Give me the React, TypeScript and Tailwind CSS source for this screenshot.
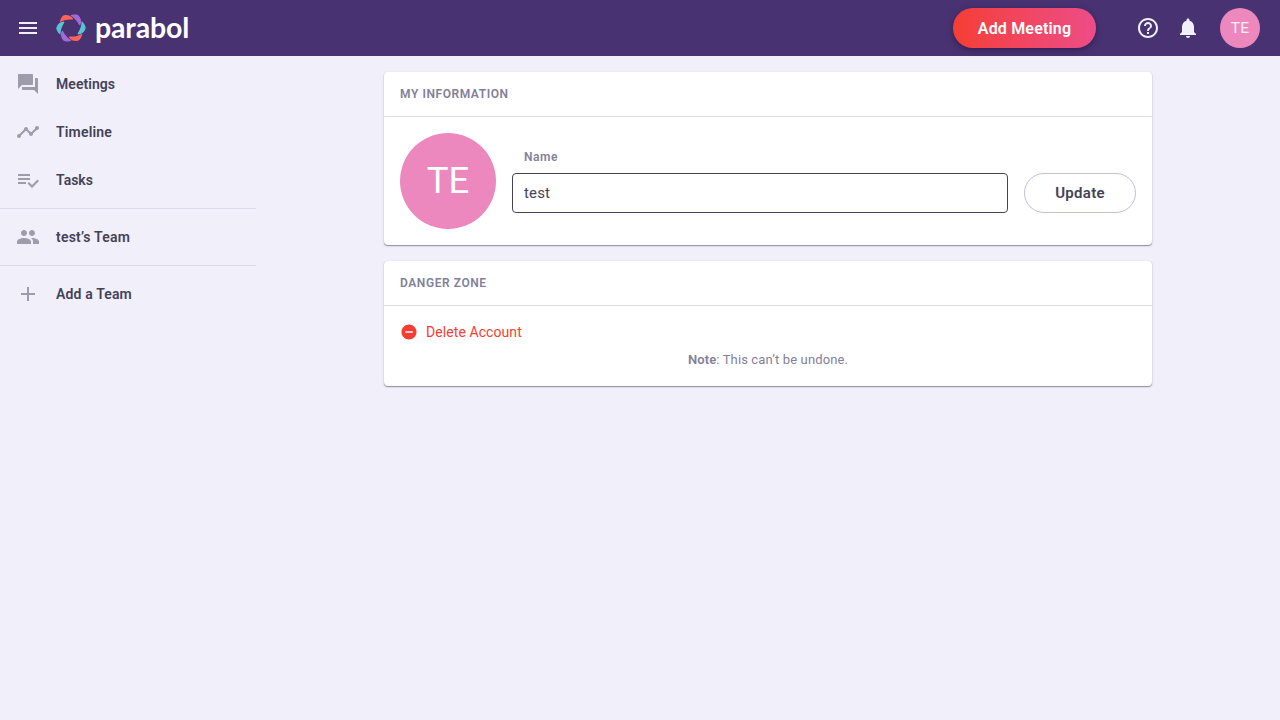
import type { ReactNode } from 'react'

const ICONS = {
  menu: 'M3 18h18v-2H3v2zm0-5h18v-2H3v2zm0-7v2h18V6H3z',
  help: 'M11 18h2v-2h-2v2zm1-16C6.48 2 2 6.48 2 12s4.48 10 10 10 10-4.48 10-10S17.52 2 12 2zm0 18c-4.41 0-8-3.59-8-8s3.59-8 8-8 8 3.59 8 8-3.59 8-8 8zm0-14c-2.21 0-4 1.79-4 4h2c0-1.1.9-2 2-2s2 .9 2 2c0 2-3 1.75-3 5h2c0-2.25 3-2.5 3-5 0-2.21-1.79-4-4-4z',
  bell: 'M12 22c1.1 0 2-.9 2-2h-4c0 1.1.89 2 2 2zm6-6v-5c0-3.07-1.64-5.64-4.5-6.32V4c0-.83-.67-1.5-1.5-1.5s-1.5.67-1.5 1.5v.68C7.63 5.36 6 7.92 6 11v5l-2 2v1h16v-1l-2-2z',
  forum: 'M21 6h-2v9H6v2c0 .55.45 1 1 1h11l4 4V7c0-.55-.45-1-1-1zm-4 6V3c0-.55-.45-1-1-1H3c-.55 0-1 .45-1 1v14l4-4h10c.55 0 1-.45 1-1z',
  timeline: 'M23 8c0 1.1-.9 2-2 2-.18 0-.35-.02-.51-.07l-3.56 3.55c.05.16.07.34.07.52 0 1.1-.9 2-2 2s-2-.9-2-2c0-.18.02-.36.07-.52l-2.55-2.55c-.16.05-.34.07-.52.07s-.36-.02-.52-.07l-4.55 4.56c.05.16.07.33.07.51 0 1.1-.9 2-2 2s-2-.9-2-2 .9-2 2-2c.18 0 .35.02.51.07l4.56-4.55C8.02 9.36 8 9.18 8 9c0-1.1.9-2 2-2s2 .9 2 2c0 .18-.02.36-.07.52l2.55 2.55c.16-.05.34-.07.52-.07s.36.02.52.07l3.55-3.56C19.02 8.35 19 8.18 19 8c0-1.1.9-2 2-2s2 .9 2 2z',
  tasks: 'M14 10H2v2h12v-2zm0-4H2v2h12V6zM2 16h8v-2H2v2zm19.5-4.5L23 13l-6.99 7-4.51-4.5L13 14l3.01 3 5.49-5.5z',
  group: 'M16 11c1.66 0 2.99-1.34 2.99-3S17.66 5 16 5c-1.66 0-3 1.34-3 3s1.34 3 3 3zm-8 0c1.66 0 2.99-1.34 2.99-3S9.66 5 8 5C6.34 5 5 6.34 5 8s1.34 3 3 3zm0 2c-2.33 0-7 1.17-7 3.5V19h14v-2.500c0-2.33-4.67-3.500-7-3.500zm8 0c-.29 0-.62.02-.97.05 1.16.84 1.97 1.97 1.97 3.450V19h6v-2.500c0-2.330-4.670-3.500-7-3.500z',
  add: 'M19 13h-6v6h-2v-6H5v-2h6V5h2v6h6v2z',
  remove: 'M12 2C6.48 2 2 6.48 2 12s4.48 10 10 10 10-4.48 10-10S17.52 2 12 2zm5 11H7v-2h10v2z',
}

function Icon({ name, className = 'size-6' }: { name: keyof typeof ICONS; className?: string }) {
  return (
    <svg viewBox="0 0 24 24" fill="currentColor" className={`shrink-0 ${className}`}>
      <path d={ICONS[name]} />
    </svg>
  )
}

const PETALS = ['#56c4d3', '#fd6157', '#a06bd6', '#56c4d3', '#fd6157', '#a06bd6']

function Logo() {
  return (
    <div className="ml-4 flex h-10 items-center">
      <svg viewBox="-15 -14 30 28" className="h-7 w-[30px] shrink-0">
        {PETALS.map((color, i) => (
          <path
            key={i}
            fill={color}
            transform={`rotate(${i * 60})`}
            d="M-7.300-6.500C-10.500-6.200-13-4.300-14.200-1.500C-14.900.2-14.800 1.200-14 2.600C-13.100 4.400-12.200 5.800-10.500 6.800C-10.500 2.400-9.300-1.500-6.900-5C-6.500-5.700-6.600-6.500-7.300-6.500Z"
          />
        ))}
      </svg>
      <span className="-mt-[3px] ml-[9px] font-['Lato'] text-[28.5px] leading-10 font-bold tracking-[-0.15px] text-white">parabol</span>
    </div>
  )
}

function NavItem({ icon, label, spacing }: { icon: keyof typeof ICONS; label: string; spacing: string }) {
  return (
    <a className="flex h-12 items-center px-4">
      <Icon name={icon} className="size-6 text-[#9d9bac]" />
      <span className={`ml-4 text-sm font-semibold ${spacing}`}>{label}</span>
    </a>
  )
}

function Panel({ title, spacing, children }: { title: string; spacing: string; children: ReactNode }) {
  return (
    <section className="rounded bg-white shadow-[0_0_1px_rgba(68,66,88,0.15),0_1px_1px_rgba(68,66,88,0.5),0_1px_3px_rgba(68,66,88,0.12)]">
      <h2 className={`flex h-[45px] items-center border-b border-[#dcdaeb] px-4 text-xs font-semibold text-[#82809a] ${spacing}`}>
        {title}
      </h2>
      {children}
    </section>
  )
}

export default function App() {
  return (
    <div className="flex h-screen flex-col bg-[#f1effa] font-['Roboto',sans-serif] text-[#444258]">
      <header className="flex h-14 shrink-0 items-center bg-[#493272] px-4 text-[#f1f0fa]">
        <Icon name="menu" />
        <Logo />
        <button className="ml-auto h-10 w-[143px] rounded-full bg-linear-to-r from-[#f53d33] to-[#ed4c86] pt-px text-base font-semibold tracking-[0.18px] text-white shadow-[0_2px_6px_rgba(30,15,55,0.55)]">
          Add Meeting
        </button>
        <Icon name="help" className="ml-10 size-6" />
        <Icon name="bell" className="ml-4 size-6" />
        <div className="mr-1 ml-5 flex size-10 items-center justify-center rounded-full bg-[#ec88be] pt-px text-[15.5px] tracking-[0.1px] text-white/85">TE</div>
      </header>
      <div className="flex flex-1">
        <nav className="w-64 shrink-0 pt-1">
          <NavItem icon="forum" label="Meetings" spacing="tracking-[0.05px]" />
          <NavItem icon="timeline" label="Timeline" spacing="tracking-[0.18px]" />
          <NavItem icon="tasks" label="Tasks" spacing="tracking-[0px]" />
          <hr className="my-1 border-[#dcdaeb]" />
          <NavItem icon="group" label="test’s Team" spacing="tracking-[0.22px]" />
          <hr className="my-1 border-[#dcdaeb]" />
          <NavItem icon="add" label="Add a Team" spacing="tracking-[0.15px]" />
        </nav>
        <main className="flex flex-1 justify-center pt-4">
          <div className="flex w-[768px] flex-col gap-4">
            <Panel title="MY INFORMATION" spacing="tracking-[0.57px]">
              <div className="flex gap-4 p-4">
                <div className="flex size-24 shrink-0 items-center justify-center rounded-full bg-[#ec88be] text-[36.5px] text-white">TE</div>
                <label className="flex flex-1 flex-col pt-3.5">
                  <span className="mb-1.5 pl-3 text-xs leading-5 font-semibold tracking-[0.55px] text-[#82809a]">Name</span>
                  <input className="h-10 rounded border border-[#444258] px-[11px] text-[15px] tracking-[0.15px] outline-none" defaultValue="test" />
                </label>
                <button className="mt-10 h-10 w-28 rounded-full border border-[#c3c0d8] text-[15px] font-semibold tracking-[0.3px]">Update</button>
              </div>
            </Panel>
            <Panel title="DANGER ZONE" spacing="tracking-[0.57px]">
              <div className="h-20 px-4 pt-4">
                <button className="flex h-[21px] items-center text-sm tracking-[0.08px] text-[#f53d33]">
                  <Icon name="remove" className="-mt-px size-[18px]" />
                  <span className="-mt-0.5 ml-2">Delete Account</span>
                </button>
                <p className="mt-[7px] text-center text-[13px] leading-5 tracking-[0.13px] text-[#82809a]">
                  <b className="font-semibold">Note</b>: This can’t be undone.
                </p>
              </div>
            </Panel>
          </div>
        </main>
      </div>
    </div>
  )
}
